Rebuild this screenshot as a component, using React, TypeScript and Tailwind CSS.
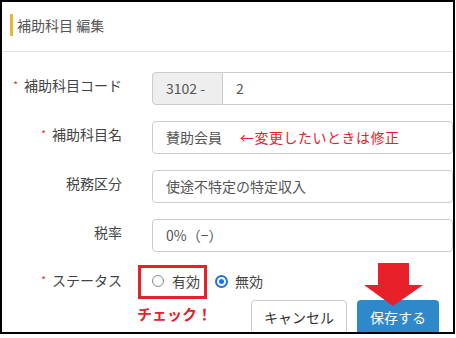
const FONT = '"Noto Sans CJK JP", "Noto Sans", sans-serif';

function Label({ text, required }: { text: string; required?: boolean }) {
  return (
    <div className="w-[120px] shrink-0 flex justify-end pt-[3px] text-[14px] leading-5 text-[#444]">
      {required && <span className="text-[#d9302c] text-[10px] leading-none mr-[6px] mt-[5px]">*</span>}
      <span>{text}</span>
    </div>
  );
}

function Field({ children }: { children: React.ReactNode }) {
  return (
    <div className="ml-[30px] w-[330px] h-[33px] flex items-center border border-[#ccc] rounded-[4px] px-[13px] text-[14px] text-[#555] bg-white">
      {children}
    </div>
  );
}

export default function App() {
  return (
    <div className="w-[455px] h-[334px] border-2 border-black bg-white overflow-hidden relative" style={{ fontFamily: FONT }}>
      {/* Header */}
      <div className="h-[50px] border-b border-[#e3e3e3] flex items-start pt-[12px] pl-[8px]">
        <div className="w-[3px] h-[22px] bg-[#e6b83a]" />
        <h1 className="ml-[4px] text-[14px] leading-[22px] text-[#555]">補助科目 編集</h1>
      </div>

      {/* Form */}
      <div className="pt-[20px] flex flex-col gap-[16px]">
        <div className="flex h-[33px]">
          <Label text="補助科目コード" required />
          <div className="ml-[30px] flex h-[33px] text-[14px] text-[#555]">
            <div className="w-[71px] flex items-center px-[13px] bg-[#eee] border border-[#ccc] rounded-l-[4px]">3102 -</div>
            <div className="w-[260px] flex items-center px-[13px] border border-l-0 border-[#ccc] rounded-r-[4px]">2</div>
          </div>
        </div>

        <div className="flex h-[33px]">
          <Label text="補助科目名" required />
          <Field>
            <span>賛助会員</span>
            <span className="ml-[18px] text-[#e8202a] tracking-[0.5px]">←変更したいときは修正</span>
          </Field>
        </div>

        <div className="flex h-[33px]">
          <Label text="税務区分" />
          <Field>使途不特定の特定収入</Field>
        </div>

        <div className="flex h-[33px]">
          <Label text="税率" />
          <Field>0%（−）</Field>
        </div>

        <div className="flex h-[28px] -mt-[1px]">
          <Label text="ステータス" required />
          <div className="ml-[30px] flex items-center text-[14px] text-[#444]">
            <span className="w-[12px] h-[12px] rounded-full border border-[#888] bg-white" />
            <span className="ml-[8px]">有効</span>
            <span className="ml-[15px] w-[13px] h-[13px] rounded-full border-2 border-[#1a73e8] flex items-center justify-center">
              <span className="w-[5px] h-[5px] rounded-full bg-[#1a73e8]" />
            </span>
            <span className="ml-[7px]">無効</span>
          </div>
        </div>
      </div>

      {/* Buttons */}
      <div className="mt-[5px] pl-[249px] flex gap-[10px] text-[14px]">
        <button className="w-[96px] h-[34px] border border-[#ccc] rounded-[4px] bg-white text-[#333]">キャンセル</button>
        <button className="w-[82px] h-[34px] rounded-[4px] bg-[#2f88c9] text-white">保存する</button>
      </div>

      {/* Annotations */}
      <div className="absolute left-[136px] top-[263px] w-[69px] h-[34px] border-[3px] border-[#e8202a]" />
      <div className="absolute left-[135px] top-[302px] text-[15px] leading-5 font-bold text-[#e8202a]">チェック！</div>
      <svg className="absolute left-[360px] top-[260px]" width="64" height="46" viewBox="0 0 64 46">
        <polygon points="16,1 47,1 47,23 61,23 31,44 2,23 16,23" fill="#e8202a" />
      </svg>
    </div>
  );
}
